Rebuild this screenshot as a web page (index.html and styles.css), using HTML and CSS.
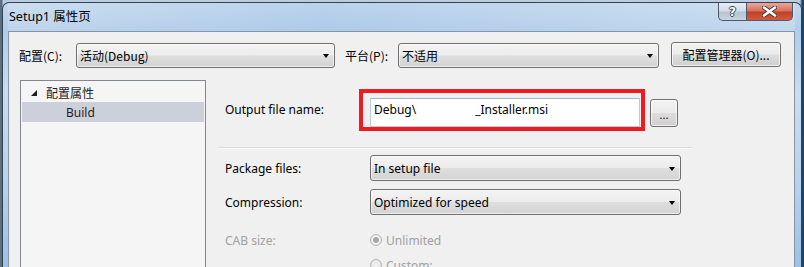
FILE: index.html
```html
<!DOCTYPE html>
<html>
<head>
<meta charset="utf-8">
<link rel="stylesheet" href="styles.css">
</head>
<body>
<div class="desk">
  <div class="window">
    <div class="titlebar">
      <span class="title">Setup1 属性页</span>
      <div class="capbtns">
        <div class="capbtn help"><span>?</span></div>
        <div class="capbtn close">
          <svg width="15" height="11" viewBox="0 0 15 11">
            <path d="M2 1.5 L13 9.5 M13 1.5 L2 9.5" stroke="#4a3a38" stroke-width="4.4" stroke-linecap="round"/>
            <path d="M2 1.5 L13 9.5 M13 1.5 L2 9.5" stroke="#ffffff" stroke-width="2.6" stroke-linecap="round"/>
          </svg>
        </div>
      </div>
    </div>
    <div class="client">
      <div class="toprow">
        <span class="toplabel l1">配置(C):</span>
        <div class="combo c1"><span>活动(Debug)</span><i class="arrow"></i></div>
        <span class="toplabel l2">平台(P):</span>
        <div class="combo c2"><span>不适用</span><i class="arrow"></i></div>
        <div class="btn cfg">配置管理器(O)...</div>
      </div>
      <div class="main">
        <div class="tree">
          <div class="node">
            <svg class="tri" width="6" height="6" viewBox="0 0 6 6"><polygon points="6,0 6,6 0,6" fill="#1e1e1e"/></svg>
            <span>配置属性</span>
          </div>
          <div class="node sel"><span>Build</span></div>
        </div>
        <div class="panel">
          <div class="row outrow">
            <span class="label">Output file name:</span>
            <div class="mark">
              <div class="textbox">Debug\<span class="gap"></span>_Installer.msi</div>
            </div>
            <div class="btn dots">...</div>
          </div>
          <div class="sep"></div>
          <div class="row pkg">
            <span class="label">Package files:</span>
            <div class="combo wide"><span>In setup file</span><i class="arrow"></i></div>
          </div>
          <div class="row comp">
            <span class="label">Compression:</span>
            <div class="combo wide"><span>Optimized for speed</span><i class="arrow"></i></div>
          </div>
          <div class="row cab">
            <span class="label dis">CAB size:</span>
            <span class="radio on"></span><span class="dis">Unlimited</span>
          </div>
          <div class="row cust">
            <span class="label dis"></span>
            <span class="radio"></span><span class="dis">Custom:</span>
          </div>
        </div>
      </div>
    </div>
  </div>
</div>
</body>
</html>
```
FILE: styles.css
```css
html, body {
  margin: 0;
  padding: 0;
}
body {
  width: 804px;
  height: 267px;
  overflow: hidden;
  background: linear-gradient(to right, #5b6f83 0, #5b6f83 2px, #b9cce0 3px, #b9cce0 800px, #1f4468 802px);
  font-family: "Noto Sans", "Noto Sans CJK SC", sans-serif;
  font-size: 12px;
  color: #000;
}
.desk {
  padding: 2px 0 0 2px;
  height: 265px;
}
.window {
  box-sizing: border-box;
  width: 800px;
  height: 270px;
  border: 1px solid #34414f;
  border-bottom: none;
  border-radius: 7px 7px 0 0;
  background: linear-gradient(to bottom, #c3d8ed 0, #b2cde9 28px, #cadcef 90px, #bcd3ec 170px, #9ec0e4 265px);
  padding: 0 6px 0 5px;
}
.titlebar {
  height: 28px;
  display: flex;
  justify-content: space-between;
  align-items: flex-start;
  background: linear-gradient(to right, rgba(255,255,255,0.15), rgba(160,195,230,0.25) 40%, rgba(255,255,255,0.2));
}
.title {
  margin: 6px 0 0 1px;
  font-family: "Noto Sans", "Noto Sans CJK SC", sans-serif;
  font-size: 12.5px;
  line-height: 16px;
  color: #000;
}
.capbtns {
  display: flex;
  margin-right: 2px;
}
.capbtn {
  box-sizing: border-box;
  height: 18px;
  border: 1px solid #4d5a68;
  border-top: none;
  display: flex;
  align-items: center;
  justify-content: center;
}
.help {
  width: 28px;
  border-right: none;
  border-radius: 0 0 0 5px;
  background: linear-gradient(to bottom, #e6edf5 0, #d3dde9 45%, #b6c4d4 55%, #c6d4e4 100%);
}
.help span {
  font-family: "DejaVu Sans", sans-serif;
  font-weight: bold;
  font-size: 12px;
  color: #fff;
  text-shadow: 1px 0 0 #3a4654, -1px 0 0 #3a4654, 0 1px 0 #3a4654, 0 -1px 0 #3a4654;
  line-height: 14px;
}
.close {
  width: 47px;
  border-radius: 0 0 5px 0;
  background: linear-gradient(to bottom, #e9a99b 0, #d9715f 45%, #c2402a 55%, #d25a3d 100%);
}
.client {
  box-sizing: border-box;
  width: 787px;
  height: 240px;
  border: 1px solid #8595a6;
  background: #f0f0f0;
}
.toprow {
  display: flex;
  align-items: center;
  padding: 11px 0 0 10px;
  height: 25px;
}
.toplabel {
  font-family: "Noto Sans CJK SC", sans-serif;
  font-size: 12px;
}
.l1 { width: 57px; }
.l2 { width: 53px; margin-left: 10px; }
.combo {
  box-sizing: border-box;
  height: 25px;
  border: 1px solid #707070;
  border-radius: 3px;
  background: linear-gradient(to bottom, #f3f3f3 0, #ececec 48%, #dedede 52%, #d3d3d3 100%);
  box-shadow: inset 0 0 0 1px rgba(255,255,255,0.6);
  display: flex;
  align-items: center;
  justify-content: space-between;
  padding: 0 4px 0 3px;
  font-family: "Noto Sans CJK SC", sans-serif;
  font-size: 12px;
}
.c1 { width: 259px; }
.c2 { width: 261px; }
.arrow {
  width: 0;
  height: 0;
  border-left: 3.5px solid transparent;
  border-right: 3.5px solid transparent;
  border-top: 4px solid #000;
  margin-right: 1px;
  margin-top: 1px;
}
.btn {
  box-sizing: border-box;
  border: 1px solid #707070;
  border-radius: 3px;
  background: linear-gradient(to bottom, #f2f2f2 0, #ebebeb 48%, #dddddd 52%, #cfcfcf 100%);
  box-shadow: inset 0 0 0 1px rgba(255,255,255,0.7);
  display: flex;
  align-items: center;
  justify-content: center;
}
.cfg {
  width: 110px;
  height: 25px;
  margin-left: 12px;
  margin-bottom: 2px;
  font-family: "Noto Sans CJK SC", sans-serif;
  font-size: 12px;
}
.main {
  display: flex;
  margin-top: 12px;
  padding-left: 11px;
}
.tree {
  box-sizing: border-box;
  width: 186px;
  height: 200px;
  border: 1px solid #828790;
  background: #f5f5f5;
  padding: 1px;
}
.node {
  height: 20px;
  display: flex;
  align-items: center;
  font-family: "Noto Sans CJK SC", sans-serif;
  font-size: 12px;
  color: #1e1e1e;
}
.tri {
  margin: 1px 9px 0 9px;
}
.node.sel {
  background: #cdd0db;
  padding-left: 44px;
  font-family: "Noto Sans", sans-serif;
}
.panel {
  margin-left: 12px;
  width: 475px;
  padding-top: 9px;
}
.row {
  display: flex;
  align-items: center;
  padding-left: 7px;
}
.label {
  width: 145px;
  flex: none;
}
.outrow .label {
  width: 134px;
}
.outrow {
  align-items: flex-start;
}
.outrow .label {
  margin-top: 12px;
}
.mark {
  border: 4px solid #ed1c24;
  padding: 5px 1px 0 7px;
}
.textbox {
  box-sizing: border-box;
  width: 270px;
  height: 29px;
  background: #fff;
  border: 1px solid #b8cde0;
  border-top-color: #9fb6cc;
  padding: 3px 0 0 3px;
  line-height: 16px;
  white-space: nowrap;
}
.gap {
  display: inline-block;
  width: 59px;
}
.dots {
  width: 28px;
  height: 28px;
  margin: 10px 0 0 5px;
  font-size: 11px;
  line-height: 10px;
  padding-top: 4px;
}
.sep {
  height: 1px;
  background: #d5dfe7;
  margin-top: 16px;
  border-bottom: 1px solid #fafafa;
}
.pkg {
  margin-top: 6px;
}
.wide {
  width: 311px;
  height: 26px;
  font-family: "Noto Sans", sans-serif;
}
.comp {
  margin-top: 8px;
}
.cab {
  margin-top: 15px;
  height: 20px;
}
.cust {
  margin-top: 5px;
  height: 20px;
}
.dis {
  color: #a0a0a0;
}
.radio {
  box-sizing: border-box;
  width: 12px;
  height: 12px;
  border-radius: 50%;
  border: 1px solid #b5b5b5;
  background: radial-gradient(circle, #f2f2f2 0, #e2e2e2 100%);
  margin-right: 4px;
  flex: none;
}
.radio.on {
  background: radial-gradient(circle, #9a9a9a 0, #b0b0b0 2.5px, #eeeeee 3.5px, #e4e4e4 100%);
}
```
